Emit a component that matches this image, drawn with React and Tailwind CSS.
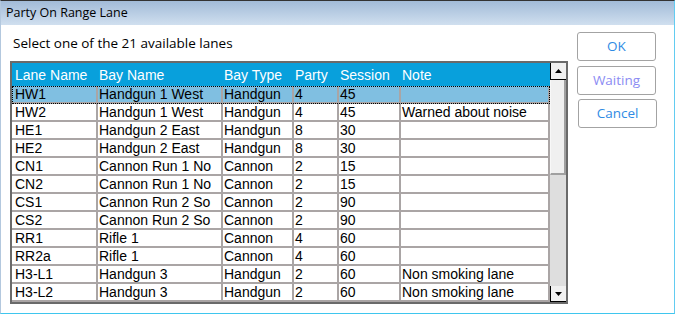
import React from "react";

const rows = [
  ["HW1", "Handgun 1 West", "Handgun", "4", "45", ""],
  ["HW2", "Handgun 1 West", "Handgun", "4", "45", "Warned about noise"],
  ["HE1", "Handgun 2 East", "Handgun", "8", "30", ""],
  ["HE2", "Handgun 2 East", "Handgun", "8", "30", ""],
  ["CN1", "Cannon Run 1 No", "Cannon", "2", "15", ""],
  ["CN2", "Cannon Run 1 No", "Cannon", "2", "15", ""],
  ["CS1", "Cannon Run 2 So", "Cannon", "2", "90", ""],
  ["CS2", "Cannon Run 2 So", "Cannon", "2", "90", ""],
  ["RR1", "Rifle 1", "Cannon", "4", "60", ""],
  ["RR2a", "Rifle 1", "Cannon", "4", "60", ""],
  ["H3-L1", "Handgun 3", "Handgun", "2", "60", "Non smoking lane"],
  ["H3-L2", "Handgun 3", "Handgun", "2", "60", "Non smoking lane"],
];

const headers = ["Lane Name", "Bay Name", "Bay Type", "Party", "Session", "Note"];
const colW = ["w-[86px] pl-[3px]", "w-[125px] pl-[1px]", "w-[71px] pl-[1px]", "w-[45px] pl-[1px]", "w-[62px] pl-[1px]", "w-[149px] pl-[1px]"];

function Row({ cells, selected }) {
  return (
    <div className={"relative flex h-[18px] shrink-0 border-b-2 border-[#aaa5a5] " + (selected ? "bg-[#80bfe1]" : "bg-white")}>
      {cells.map((c, i) => (
        <div key={i} className={colW[i] + " h-[16px] shrink-0 overflow-hidden whitespace-nowrap border-r-2 border-[#aaa5a5] leading-[17px]"}>
          {c}
        </div>
      ))}
      {selected && <div className="pointer-events-none absolute left-0 top-0 h-[18px] w-[538px] border border-dotted border-black" />}
    </div>
  );
}

function Btn({ children, color }) {
  return (
    <div className={"flex h-[29px] w-[79px] items-center justify-center rounded-[3px] border border-[#a3a3a3] bg-white text-[13.5px] " + color}>
      {children}
    </div>
  );
}

export default function App() {
  return (
    <div className="h-[315px] w-[676px] bg-white">
      <div className="flex h-[314px] w-[675px] flex-col border-t border-l border-r border-b border-t-[#333333] border-l-[#b3c8de] border-r-[#62ccf1] border-b-[#3fc6ee] font-['Open_Sans',sans-serif]">
        <div className="flex h-[24px] shrink-0 items-center bg-gradient-to-b from-[#a2bbd8] to-[#d0dfef] pl-[5px] text-[12.5px] text-black">
          Party On Range Lane
        </div>
        <div className="flex flex-1 bg-white">
          <div className="flex flex-col pl-[9px] pt-[9px]">
            <div className="ml-[3px] h-[18px] text-[13.5px] leading-[18px] text-black">Select one of the 21 available lanes</div>
            <div className="mt-[9px] flex h-[243px] w-[558px] border-2 border-[#6a6a6a] font-['Liberation_Sans',Arial,sans-serif] text-[14px] text-black">
              <div className="flex h-full w-[538px] flex-col overflow-hidden">
                <div className="flex h-[23px] shrink-0 items-center bg-[#08a0dc] pt-[1px] text-white">
                  {headers.map((h, i) => (
                    <div key={i} className={colW[i] + " shrink-0 whitespace-nowrap border-r-2 border-transparent"}>
                      {h}
                    </div>
                  ))}
                </div>
                {rows.map((r, i) => (
                  <Row key={i} cells={r} selected={i === 0} />
                ))}
              </div>
              <div className="flex h-full w-[16px] flex-col bg-[#dedede]">
                <div className="flex h-[17px] shrink-0 items-center justify-center border-b border-l border-black bg-[#f0f0f0]">
                  <svg width="7" height="4" viewBox="0 0 7 4"><path d="M3.5 0L7 4H0z" fill="#000" /></svg>
                </div>
                <div className="h-[95px] shrink-0 border-b-2 border-r-2 border-l border-b-[#a0a0a0] border-r-[#a0a0a0] border-l-[#f8f8f8] bg-[#f0f0f0]" />
                <div className="flex-1" />
                <div className="flex h-[16px] shrink-0 items-center justify-center border-b border-l border-black bg-[#f0f0f0]">
                  <svg width="7" height="4" viewBox="0 0 7 4"><path d="M0 0H7L3.5 4z" fill="#000" /></svg>
                </div>
              </div>
            </div>
          </div>
          <div className="ml-[9px] mt-[7px] flex flex-col">
            <Btn color="text-[#2f8be4]">OK</Btn>
            <div className="mt-[5px]"><Btn color="text-[#8b8cf3]">Waiting</Btn></div>
            <div className="mt-[4px] ml-[1px]"><Btn color="text-[#2f8be4]">Cancel</Btn></div>
          </div>
        </div>
      </div>
    </div>
  );
}
